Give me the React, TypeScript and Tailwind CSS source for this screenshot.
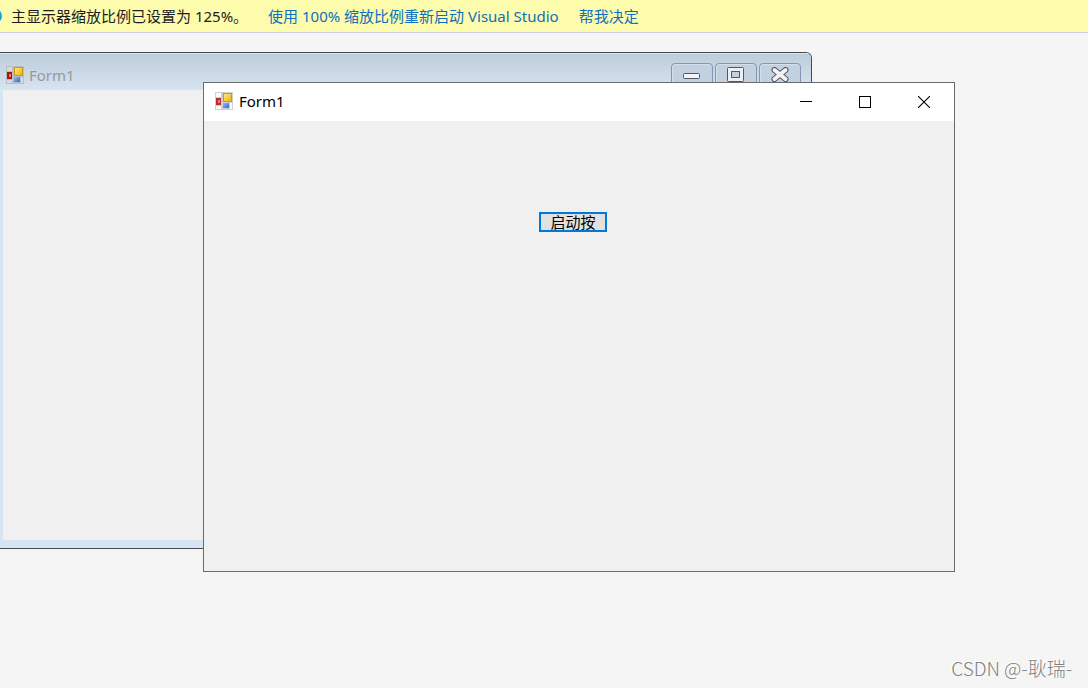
import React from "react";

const FormIcon = ({ id, faded }: { id: string, faded?: boolean }) => (
    <svg className="h-[18px] w-[18px] shrink-0" viewBox="0 0 18 18" aria-hidden="true">
        <defs>
            <linearGradient id={id + '-y'} x1="0" y1="0" x2="1" y2="1">
                <stop offset="0" stopColor="#ffec8c" />
                <stop offset="1" stopColor="#f2ae00" />
            </linearGradient>
            <linearGradient id={id + '-b'} x1="0" y1="0" x2="1" y2="1">
                <stop offset="0" stopColor="#8fb8ff" />
                <stop offset="1" stopColor="#2f6be0" />
            </linearGradient>
        </defs>
        <rect width="18" height="18" fill={faded ? '#bdbdbd' : '#cfcfcf'} />
        <path d="M1 1h5v4H1zM1 14h5v3H1zM15 11h2v6h-2z" fill={faded ? '#d3dde7' : '#ffffff'} />
        <rect x="1" y="6" width="5" height="7" fill={faded ? '#b01010' : '#b8302c'} />
        <rect x="3" y="8" width="2" height="3" fill="#e08078" />
        <rect x="8.5" y="1.5" width="8" height="8" fill={`url(#${id}-y)`} stroke="#c99a1a" />
        <rect x="8" y="11" width="6" height="5" fill={`url(#${id}-b)`} />
    </svg>
)

const classicButton = "flex h-7 w-[42px] items-start rounded-t-sm border border-[#8496b4] bg-[#c2d1e2] pl-[11px] shadow-[inset_1px_1px_0_#d3dfeb]";
const captionButton = "flex h-[38px] w-[59px] items-center pl-[23px]";

// the form on the designer surface, partly behind the running one
const DesignerWindow = () => (
    <section className="absolute top-[19px] left-0 flex h-[497px] w-[812px] flex-col overflow-hidden rounded-tr-md border-t border-r border-b border-[#454950] bg-[#d7e4f2] pr-2 pb-2">
        <header className="flex h-[37px] shrink-0 justify-between bg-linear-to-b from-[#bdccda] to-[#d7e4f2] pl-1.5 -mr-2 pr-2.5 shadow-[inset_0_1px_0_#dce6ef]">
            <div className="flex items-center gap-[5px] pt-1.5">
                <FormIcon id="designer" faded />
                <h2 className="text-[15px] leading-5 text-[#999999]">Form1</h2>
            </div>
            <div className="flex gap-0.5 pt-2.5">
                <button className={classicButton} aria-label="最小化">
                    <svg className="mt-[9px] h-[6px] w-[17px]" viewBox="0 0 17 6">
                        <rect x="0.5" y="0.5" width="16" height="5" rx="1" fill="#f4f4f4" stroke="#535666" />
                    </svg>
                </button>
                <button className={classicButton} aria-label="最大化">
                    <svg className="mt-[3px] h-[15px] w-[17px]" viewBox="0 0 17 15">
                        <path d="M1.5 .5h14a1 1 0 0 1 1 1v12a1 1 0 0 1-1 1h-14a1 1 0 0 1-1-1v-12a1 1 0 0 1 1-1z" fill="#efefef" stroke="#535666" />
                        <rect x="4.5" y="4.5" width="8" height="6" fill="#c2d1e2" stroke="#535666" />
                    </svg>
                </button>
                <button className={classicButton} aria-label="关闭">
                    <svg className="mt-[3px] h-[15px] w-[18px]" viewBox="0 0 18 15">
                        <path d="M3.5 3l11 9M14.5 3l-11 9" stroke="#535666" strokeWidth="6" strokeLinecap="round" />
                        <path d="M3.5 3l11 9M14.5 3l-11 9" stroke="#f4f4f4" strokeWidth="4" strokeLinecap="round" />
                    </svg>
                </button>
            </div>
        </header>
        <div className="ml-[3px] flex-1 bg-[#f0f0f0]" />
    </section>
)

const RunningWindow = () => (
    <section className="absolute top-[49px] left-[203px] flex h-[490px] w-[752px] flex-col border border-[#6b6b6b] bg-[#f0f0f0]">
        <header className="flex h-[38px] shrink-0 justify-between bg-white pl-[11px]">
            <div className="flex items-center gap-1.5 pb-0.5">
                <FormIcon id="running" />
                <h2 className="text-[15px] leading-5 text-black">Form1</h2>
            </div>
            <div className="flex">
                <button className={captionButton} aria-label="最小化">
                    <svg className="h-3 w-3" viewBox="0 0 12 12"><path d="M0 5.5h12" stroke="#000" /></svg>
                </button>
                <button className={captionButton} aria-label="最大化">
                    <svg className="h-3 w-3" viewBox="0 0 12 12"><rect x="0.5" y="0.5" width="11" height="11" fill="none" stroke="#000" /></svg>
                </button>
                <button className={captionButton} aria-label="关闭">
                    <svg className="h-3 w-3" viewBox="0 0 12 12"><path d="M0 0l12 12M12 0L0 12" stroke="#000" strokeWidth="1.1" /></svg>
                </button>
            </div>
        </header>
        <div className="flex flex-1 items-start pt-[91px] pl-[335px]">
            <button className="flex h-5 w-[68px] items-center justify-center overflow-hidden border-2 border-[#0078d7] bg-[#e1e1e1] text-[15px] leading-5 text-black">启动按</button>
        </div>
    </section>
)

const App = () => {
    return (
        <div className="flex min-h-screen flex-col bg-[#f5f5f5] font-['Noto_Sans','Noto_Sans_CJK_SC',sans-serif]">
            <div className="flex h-[33px] items-center overflow-hidden border-b border-[#cccedb] bg-[#fdfbac] text-[15px] leading-5 whitespace-nowrap text-[#1e1e1e]">
                <svg className="h-4 w-[11px]" viewBox="0 0 11 16" aria-hidden="true">
                    <circle cx="-5" cy="8" r="7" fill="#1ba1e2" />
                </svg>
                <p>主显示器缩放比例已设置为 125%。</p>
                <a href="#restart" className="ml-5 text-[#0e70c0]">使用 100% 缩放比例重新启动 Visual Studio</a>
                <a href="#help" className="ml-5 text-[#0e70c0]">帮我决定</a>
            </div>
            <main className="relative flex min-h-[560px] flex-1 flex-col overflow-hidden">
                <DesignerWindow />
                <RunningWindow />
                <p className="absolute right-4 bottom-2 font-['Noto_Sans_CJK_SC',sans-serif] text-[19px] leading-6 font-light text-[#808080] [text-shadow:-1px_-1px_0_#ffffff]">CSDN @-耿瑞-</p>
            </main>
        </div>
    )
}

export default App;
